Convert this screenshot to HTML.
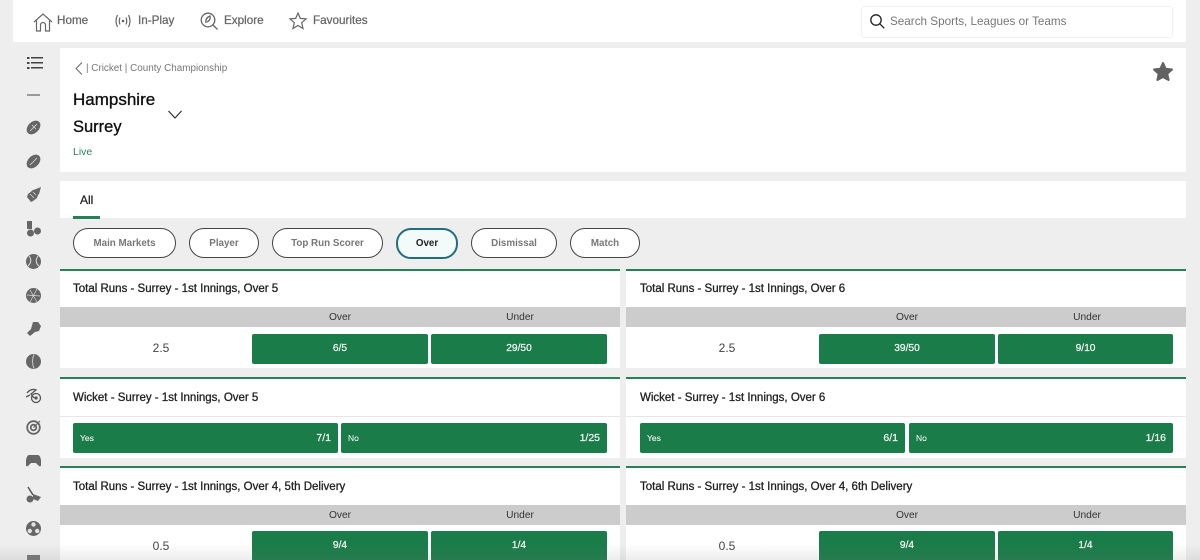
<!DOCTYPE html>
<html><head><meta charset="utf-8"><style>
html,body{margin:0;padding:0;width:1200px;height:560px;overflow:hidden;background:#eee;font-family:"Liberation Sans",sans-serif}
.a{position:absolute}
#r{position:relative;width:1200px;height:560px;overflow:hidden;background:#eee;filter:blur(.3px)}
.w{position:absolute;background:#fff}
.t{position:absolute;white-space:nowrap;line-height:16px}
.nav{font-size:11.7px;color:#666;top:13px;-webkit-text-stroke:.25px #666}
.pill{position:absolute;top:228px;height:28px;border:1px solid #444;border-radius:15px;background:#fff;color:#777;font-size:9.8px;font-weight:bold;text-align:center;line-height:29px}
.h{font-size:11.5px;color:#222;left:13px;-webkit-text-stroke:.3px #222}
.g{position:absolute;left:0;width:100%;height:20px;background:#ccc}
.g span{position:absolute;top:1px;font-size:10.2px;line-height:20px;color:#333;width:176px;text-align:center}
.b{position:absolute;background:#1a7c49;color:#f4f4f4;border-radius:2px;font-size:10.2px;text-align:center;height:30px;line-height:30px;-webkit-text-stroke:.25px #f4f4f4}
.v{position:absolute;font-size:12px;color:#444;text-align:center;width:202px;left:0}
.card{position:absolute;width:560px;background:#fff;border-top:2px solid #26805a;box-sizing:border-box}
.yn{font-size:8.5px;position:absolute;left:7px;top:0;-webkit-text-stroke:.1px #f4f4f4}
.od{position:absolute;right:7px;top:0;font-size:10.5px}
svg{position:absolute;overflow:visible}
.i{fill:#666}
</style></head><body><div id="r">
<div class="w" style="left:13px;top:0;width:1173px;height:42px"></div>
<svg style="left:33px;top:12px" width="20" height="20" viewBox="0 0 20 20" fill="none" stroke="#666" stroke-width="1.2"><path d="M1 10 10 2l9 8M3.500 8.500V19h4v-6a2.500 2.500 0 0 1 5 0v6h4V8.500"/></svg>
<div class="t nav" style="left:57px">Home</div>
<svg style="left:114px;top:13px" width="18" height="16" viewBox="0 0 18 16" fill="none" stroke="#666" stroke-width="1.200"><path d="M3.500 2Q.5 8 3.500 14M6 4.500Q4.500 8 6 11.500M12 4.500Q13.500 8 12 11.500M14.500 2Q17.500 8 14.500 14"/><circle cx="9" cy="8" r="1.300" fill="#666" stroke="none"/></svg>
<div class="t nav" style="left:138px">In-Play</div>
<svg style="left:200px;top:12px" width="18" height="18" viewBox="0 0 18 18" fill="none" stroke="#666" stroke-width="1.300"><circle cx="8" cy="8" r="6.800"/><path d="M13 13l4.500 4.500M6 11Q5 6 10 4Q11 8 7 10"/></svg>
<div class="t nav" style="left:224px">Explore</div>
<svg style="left:289px;top:12px" width="18" height="18" viewBox="0 0 18 18" fill="none" stroke="#666" stroke-width="1.200"><path d="M9 1l2.300 5.400 5.700.5-4.300 3.800 1.300 5.800L9 13.500l-5 3 1.300-5.800L1 6.900l5.700-.5z"/></svg>
<div class="t nav" style="left:313px">Favourites</div>
<div class="a" style="left:861px;top:6px;width:310px;height:30px;border:1px solid #f1f1f1;border-radius:3px"></div>
<svg style="left:870px;top:14px" width="15" height="15" viewBox="0 0 15 15" fill="none" stroke="#222" stroke-width="1.300"><circle cx="6" cy="6" r="5.200"/><path d="M9.800 9.800l4.500 4.500"/></svg>
<div class="t" style="left:890px;top:14px;font-size:11.7px;color:#777">Search Sports, Leagues or Teams</div>

<svg style="left:27px;top:57px" width="16" height="12" viewBox="0 0 16 12" fill="#444"><rect x="0" y="0" width="2.500" height="2"/><rect x="0" y="5" width="2.500" height="2"/><rect x="0" y="10" width="2.500" height="2"/><rect x="4" y="0" width="12" height="1.500"/><rect x="4" y="5" width="12" height="1.500"/><rect x="4" y="10" width="12" height="1.500"/></svg>
<div class="a" style="left:27px;top:94px;width:13px;height:1.500px;background:#999"></div>
<svg style="left:26px;top:120px" width="15" height="15" viewBox="0 0 15 15"><ellipse class="i" cx="7.500" cy="7.500" rx="8" ry="5.500" transform="rotate(-45 7.500 7.500)"/><path d="M4 11 11 4M6 5l4 4" stroke="#ddd" stroke-width=".8"/></svg>
<svg style="left:26px;top:154px" width="15" height="15" viewBox="0 0 15 15"><ellipse class="i" cx="7.500" cy="7.500" rx="8" ry="5.500" transform="rotate(-45 7.500 7.500)"/><path d="M4 11 11 4" stroke="#ddd" stroke-width=".8"/></svg>
<svg style="left:26px;top:187px" width="15" height="15" viewBox="0 0 15 15"><path class="i" d="M15 0 13 7l-1 1-1 3-4 3-2 1-4-5 1-3 5-4 3-1z"/><path d="M4 7l4 4M7 5l3 3" stroke="#ddd" stroke-width=".7"/></svg>
<svg style="left:27px;top:221px" width="14" height="16" viewBox="0 0 14 16"><path class="i" d="M0 0h5v8H0z"/><circle class="i" cx="3.500" cy="12" r="3.500"/><circle class="i" cx="10.500" cy="10" r="3.500"/></svg>
<svg style="left:26px;top:254px" width="15" height="15" viewBox="0 0 15 15"><circle class="i" cx="7.500" cy="7.500" r="7.500"/><path d="M3 2Q7 7 2 12M12 2Q8 8 13 12" stroke="#ddd" fill="none"/></svg>
<svg style="left:26px;top:288px" width="15" height="15" viewBox="0 0 15 15"><circle class="i" cx="7.500" cy="7.500" r="7.500"/><path d="M1 7 14 8M4 2 11 14M11 1 4 14" stroke="#ddd" fill="none" stroke-width=".7"/></svg>
<svg style="left:26px;top:321px" width="15" height="15" viewBox="0 0 15 15"><path class="i" d="M7 1h5l3 4-2 5-4 1-5 4-3-3 4-4z"/></svg>
<svg style="left:26px;top:354px" width="15" height="15" viewBox="0 0 15 15"><circle class="i" cx="7.500" cy="7.500" r="7.500"/><path d="M8 .5Q5 7 8 14.500" stroke="#ccc" fill="none"/></svg>
<svg style="left:26px;top:388px" width="15" height="15" viewBox="0 0 15 15" fill="none" stroke="#555" stroke-width="1.300"><circle cx="10" cy="10" r="4.500"/><circle cx="10" cy="10" r="1" fill="#555"/><path d="M1 5Q5 0 10 2L5 6l3 4M0 9l4-2"/></svg>
<svg style="left:26px;top:420px" width="15" height="15" viewBox="0 0 15 15" fill="none" stroke="#666" stroke-width="1.800"><circle cx="7.500" cy="7.500" r="6.300"/><circle cx="7.500" cy="7.500" r="2.800"/><path d="M7.500 7.500 14 1" stroke-width="1.200"/></svg>
<svg style="left:26px;top:455px" width="15" height="12" viewBox="0 0 15 12"><path class="i" d="M3 0h9q2 0 3 5v5q0 2-2 1L10 8H5l-3 3q-2 1-2-1V5q1-5 3-5z"/></svg>
<svg style="left:26px;top:487px" width="15" height="16" viewBox="0 0 15 16"><path d="M2 0 7 8" stroke="#555" stroke-width="1.500"/><circle class="i" cx="4" cy="12" r="3.500"/><path class="i" d="M7 7l8 3-3 4-5-2z"/></svg>
<svg style="left:26px;top:521px" width="15" height="15" viewBox="0 0 15 15"><circle class="i" cx="7.500" cy="7.500" r="7.500"/><circle cx="7.500" cy="3.500" r="2.200" fill="#e2e2e2"/><circle cx="3.800" cy="10" r="2.200" fill="#e2e2e2"/><circle cx="11.200" cy="10" r="2.200" fill="#e2e2e2"/></svg>
<div class="a" style="left:27px;top:555px;width:13px;height:5px;background:#777"></div>

<div class="w" style="left:60px;top:48px;width:1126px;height:124px"></div>
<svg style="left:75px;top:62px" width="8" height="13" viewBox="0 0 8 13" fill="none" stroke="#666" stroke-width="1"><path d="M7 .5 1 6.500l6 6"/></svg>
<div class="t" style="left:86px;top:61px;font-size:9.9px;color:#777">| Cricket | County Championship</div>
<div class="t" style="left:73px;top:91px;font-size:17px;color:#111;line-height:18px;-webkit-text-stroke:.35px #111">Hampshire</div>
<div class="t" style="left:73px;top:118px;font-size:16.500px;color:#111;line-height:18px;-webkit-text-stroke:.35px #111">Surrey</div>
<svg style="left:168px;top:110px" width="14" height="9" viewBox="0 0 14 9" fill="none" stroke="#222" stroke-width="1.100"><path d="M.5 1 7 8l6.500-7"/></svg>
<div class="t" style="left:73px;top:144px;font-size:10.500px;color:#2b8060">Live</div>
<svg style="left:1152px;top:61px" width="22" height="21" viewBox="0 0 22 21"><path fill="#616161" stroke="#616161" stroke-width="2" stroke-linejoin="round" d="M11 2l2.700 5.800 6.300.7-4.700 4.300 1.300 6.200L11 16l-5.600 3 1.300-6.200L2 8.500l6.300-.7z"/></svg>

<div class="w" style="left:60px;top:181px;width:1126px;height:37px"></div>
<div class="t" style="left:80px;top:192px;font-size:12px;color:#222;-webkit-text-stroke:.25px #222">All</div>
<div class="a" style="left:73px;top:216px;width:27px;height:3px;background:#26805a"></div>

<div class="pill" style="left:73px;width:101px">Main Markets</div>
<div class="pill" style="left:189px;width:68px">Player</div>
<div class="pill" style="left:272px;width:109px">Top Run Scorer</div>
<div class="pill" style="left:396px;width:58px;background:#f3fbfa;color:#222;border:2px solid #1f6f80;top:228px;height:27px;line-height:28px">Over</div>
<div class="pill" style="left:471px;width:84px">Dismissal</div>
<div class="pill" style="left:570px;width:68px">Match</div>

<!-- col 1 -->
<div class="card" style="left:60px;top:269px;height:99px">
<div class="t h" style="top:10px">Total Runs - Surrey - 1st Innings, Over 5</div>
<div class="g" style="top:36px"><span style="left:192px">Over</span><span style="left:372px">Under</span></div>
<div class="v" style="top:69px;line-height:16px">2.5</div>
<div class="b" style="left:192px;top:63px;width:176px">6/5</div><div class="b" style="left:371px;top:63px;width:176px">29/50</div>
</div>
<div class="card" style="left:60px;top:377px;height:81px">
<div class="t h" style="top:11px">Wicket - Surrey - 1st Innings, Over 5</div>
<div class="a" style="left:0;top:37px;width:100%;height:1px;background:#e6e6e6"></div>
<div class="b" style="left:13px;top:44px;width:265px"><span class="yn">Yes</span><span class="od">7/1</span></div>
<div class="b" style="left:281px;top:44px;width:266px"><span class="yn">No</span><span class="od">1/25</span></div>
</div>
<div class="card" style="left:60px;top:466px;height:94px">
<div class="t h" style="top:11px">Total Runs - Surrey - 1st Innings, Over 4, 5th Delivery</div>
<div class="g" style="top:37px"><span style="left:192px">Over</span><span style="left:372px">Under</span></div>
<div class="v" style="top:70px;line-height:16px">0.5</div>
<div class="b" style="left:192px;top:63px;width:176px">9/4</div><div class="b" style="left:371px;top:63px;width:176px">1/4</div>
</div>
<!-- col 2 -->
<div class="card" style="left:626px;top:269px;height:99px">
<div class="t h" style="top:10px;left:14px">Total Runs - Surrey - 1st Innings, Over 6</div>
<div class="g" style="top:36px"><span style="left:193px">Over</span><span style="left:373px">Under</span></div>
<div class="v" style="top:69px;line-height:16px">2.5</div>
<div class="b" style="left:193px;top:63px;width:176px">39/50</div><div class="b" style="left:372px;top:63px;width:175px">9/10</div>
</div>
<div class="card" style="left:626px;top:377px;height:81px">
<div class="t h" style="top:11px;left:14px">Wicket - Surrey - 1st Innings, Over 6</div>
<div class="a" style="left:0;top:37px;width:100%;height:1px;background:#e6e6e6"></div>
<div class="b" style="left:14px;top:44px;width:265px"><span class="yn">Yes</span><span class="od">6/1</span></div>
<div class="b" style="left:283px;top:44px;width:264px"><span class="yn">No</span><span class="od">1/16</span></div>
</div>
<div class="card" style="left:626px;top:466px;height:94px">
<div class="t h" style="top:11px;left:14px">Total Runs - Surrey - 1st Innings, Over 4, 6th Delivery</div>
<div class="g" style="top:37px"><span style="left:193px">Over</span><span style="left:373px">Under</span></div>
<div class="v" style="top:70px;line-height:16px">0.5</div>
<div class="b" style="left:193px;top:63px;width:176px">9/4</div><div class="b" style="left:372px;top:63px;width:175px">1/4</div>
</div>
<div class="a" style="left:0;top:544px;width:1200px;height:16px;background:linear-gradient(rgba(120,120,120,0),rgba(120,120,120,.14))"></div>
</div></body></html>
